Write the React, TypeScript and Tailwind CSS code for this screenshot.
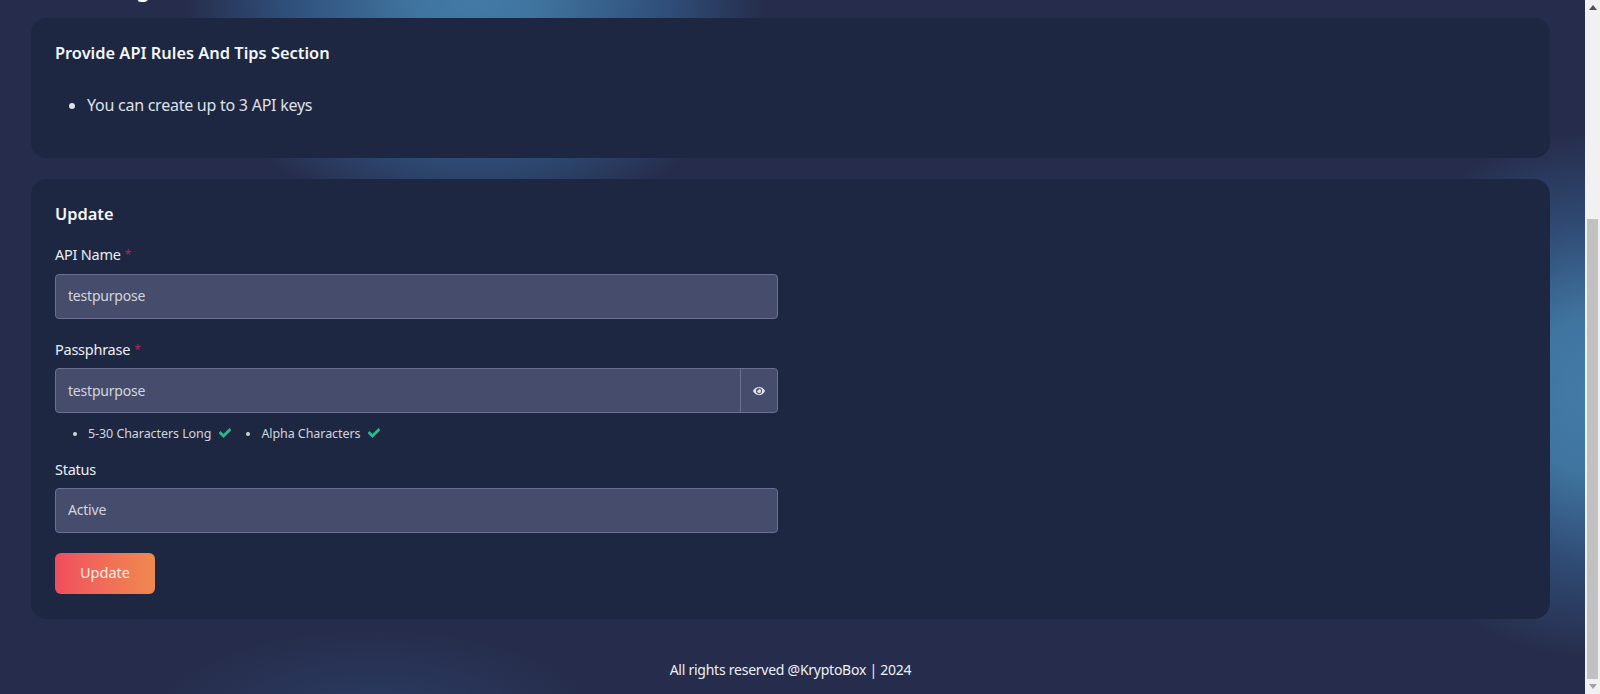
import React from 'react';
import { FaCheck, FaEye } from 'react-icons/fa';

const fieldClass =
  'h-[45px] w-[723px] rounded-[4px] border border-[#6b7092] bg-[#464c6c] pl-3 pb-[2px] flex items-center text-[14px] tracking-[-0.2px] text-[#d3d5de]';

function Label({ text, required, low }: { text: string; required?: boolean; low?: boolean }) {
  return (
    <div className={`h-[21px] mb-[8px] flex items-center text-[14.5px] tracking-[-0.25px] text-[#eceef3] ${low ? 'pt-[1px]' : 'pb-[1px]'}`}>
      {text}
      {required && <span className="ml-[4px] text-[12px] text-[#a82a52]">*</span>}
    </div>
  );
}

function Scrollbar() {
  return (
    <div className="w-[15px] h-full shrink-0 bg-[#f1f1f1] flex flex-col items-center">
      <div className="h-[15px] flex items-center justify-center">
        <div className="w-0 h-0 border-x-[4px] border-x-transparent border-b-[5px] border-b-[#505050]" />
      </div>
      <div className="h-[204px]" />
      <div className="w-[11px] flex-1 bg-[#c1c1c1]" />
      <div className="h-[15px] flex items-center justify-center">
        <div className="w-0 h-0 border-x-[4px] border-x-transparent border-t-[5px] border-t-[#a3a3a3]" />
      </div>
    </div>
  );
}

export default function App(): React.JSX.Element {
  return (
    <div className="flex h-[694px] w-[1600px] overflow-hidden font-['Noto_Sans',sans-serif]">
      <main className="flex-1 h-full overflow-hidden pl-[31px] pr-[35px] bg-[#262c4b] bg-[radial-gradient(ellipse_292px_245px_at_475px_-10px,#437ca8_0%,#3f749f_22%,#2f4f7a_65%,#262c4b00_100%),radial-gradient(ellipse_250px_265px_at_1595px_395px,#437ca8_0%,#3f749f_30%,#2f4a73_65%,#262c4b00_100%),radial-gradient(ellipse_230px_90px_at_375px_715px,#2a3c62_0%,#262c4b00_100%)]">
        <div className="h-[18px] overflow-hidden">
          <h1 className="-mt-[27px] h-[30px] leading-[30px] text-[22px] font-semibold text-white">API Settings</h1>
        </div>

        <section className="h-[140px] rounded-[16px] bg-[#1e2742] px-[24px] pt-[24px]">
          <h2 className="h-[23px] flex items-center text-[16.4px] font-semibold text-[#f4f5f8]">
            Provide API Rules And Tips Section
          </h2>
          <ul className="mt-[28px] ml-[32px] list-disc text-[16px] tracking-[-0.25px] text-[#dfe1e8]">
            <li>You can create up to 3 API keys</li>
          </ul>
        </section>

        <section className="mt-[21px] h-[440px] rounded-[16px] bg-[#1e2742] px-[24px] pt-[25px]">
          <h2 className="h-[21px] mb-[20px] flex items-center text-[16.4px] font-semibold text-[#f4f5f8]">Update</h2>

          <Label text="API Name" required />
          <div className={fieldClass}>testpurpose</div>

          <div className="h-[20px]" />
          <Label text="Passphrase" required low />
          <div className={`${fieldClass} justify-between`}>
            <span className="pt-[1px]">testpurpose</span>
            <span className="-mb-[2px] h-[43px] w-[37px] border-l border-[#6b7092] flex items-center justify-center">
              <FaEye className="text-[12px] text-[#e0e2ea]" />
            </span>
          </div>

          <ul className="ml-[33px] mt-[11px] flex h-[21px] items-center list-disc text-[12.5px] tracking-[-0.07px] text-[#d3d5de]">
            <li className="list-item">
              5-30 Characters Long
              <FaCheck className="inline align-[-1px] ml-[8px] text-[12px] text-[#2bb98a]" stroke="currentColor" strokeWidth={30} />
            </li>
            <li className="ml-[30px] list-item">
              Alpha Characters
              <FaCheck className="inline align-[-1px] ml-[8px] text-[12px] text-[#2bb98a]" stroke="currentColor" strokeWidth={30} />
            </li>
          </ul>

          <div className="h-[14px]" />
          <Label text="Status" low />
          <div className={fieldClass}>Active</div>

          <button className="mt-[20px] pb-[1px] h-[41px] w-[100px] rounded-[6px] bg-linear-to-r from-[#f04d5e] to-[#f0884e] text-[14.5px] text-[#fbe9e4]">
            Update
          </button>
        </section>

        <footer className="mt-[40px] text-center text-[14px] tracking-[-0.25px] text-[#eef0f4]">All rights reserved @KryptoBox | 2024</footer>
      </main>
      <Scrollbar />
    </div>
  );
}
